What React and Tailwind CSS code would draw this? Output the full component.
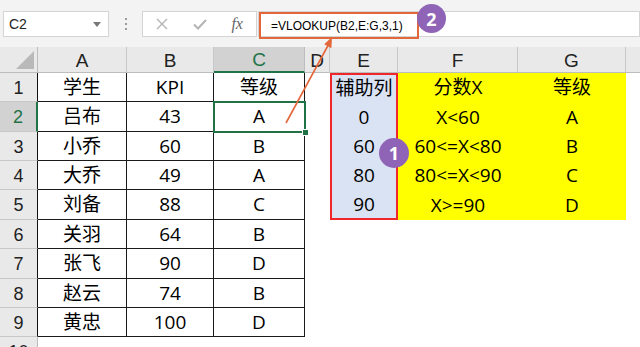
import React from "react";

const FONT = "font-['Open_Sans','Noto_Sans_CJK_SC',sans-serif]";

function HeaderCell({ label, selected, last }) {
  if (selected) {
    return (
      <div className="flex items-center justify-center bg-[#d2d2d2] border-r border-[#bdbdbd] border-b-2 border-b-[#217346] text-[#217346] text-[19px] font-['Liberation_Sans',sans-serif] leading-none pt-[1px]">
        {label}
      </div>
    );
  }
  return (
    <div className={"flex items-center justify-center bg-[#e9e9e9] border-b border-b-[#bdbdbd] text-[#222] text-[19px] font-['Liberation_Sans',sans-serif] leading-none pt-[1px] " + (last ? "" : "border-r border-r-[#c8c8c8]")}>
      {label}
    </div>
  );
}

function RowHead({ n, selected, table }) {
  if (selected) {
    return (
      <div className="flex items-center justify-center bg-[#d2d2d2] border-r-2 border-r-[#217346] border-b border-b-[#c8c8c8] text-[#217346] text-[18px] font-['Liberation_Sans',sans-serif] leading-none">
        {n}
      </div>
    );
  }
  return (
    <div className={"flex items-center justify-center bg-[#e9e9e9] border-b border-b-[#c8c8c8] text-[#222] text-[18px] font-['Liberation_Sans',sans-serif] leading-none items-start pt-[6px] " + (table ? "border-r border-r-[#111]" : "border-r border-r-[#bdbdbd]")}>
      {n}
    </div>
  );
}

function T({ children }) {
  return (
    <div className="flex items-center justify-center border-r border-b border-[#1a1a1a] text-[19px] text-black whitespace-nowrap">
      {children}
    </div>
  );
}

function Blank() {
  return <div />;
}

function E({ children, first, last }) {
  const cls = first
    ? "flex items-center justify-center bg-[#dae3f3] border-l-2 border-r-2 border-t-2 border-[#f0262a] text-[19px] text-black whitespace-nowrap"
    : last
    ? "flex items-center justify-center bg-[#dae3f3] border-l-2 border-r-2 border-b-2 border-[#f0262a] text-[19px] text-black whitespace-nowrap"
    : "flex items-center justify-center bg-[#dae3f3] border-l-2 border-r-2 border-[#f0262a] text-[19px] text-black whitespace-nowrap";
  return <div className={cls}>{children}</div>;
}

function Y({ children }) {
  return (
    <div className="flex items-center justify-center bg-[#ffff00] text-[19px] text-black whitespace-nowrap">
      {children}
    </div>
  );
}

export default function App() {
  const table = [
    ["学生", "KPI", "等级"],
    ["吕布", "43", "A"],
    ["小乔", "60", "B"],
    ["大乔", "49", "A"],
    ["刘备", "88", "C"],
    ["关羽", "64", "B"],
    ["张飞", "90", "D"],
    ["赵云", "74", "B"],
    ["黄忠", "100", "D"],
  ];
  const side = [
    ["辅助列", "分数X", "等级"],
    ["0", "X<60", "A"],
    ["60", "60<=X<80", "B"],
    ["80", "80<=X<90", "C"],
    ["90", "X>=90", "D"],
  ];

  return (
    <div className={"relative w-[640px] h-[347px] overflow-hidden bg-white " + FONT}>
      {/* Formula bar */}
      <div className="h-[47px] bg-[#f3f3f3] flex items-start pt-[11px]">
        <div className="ml-[3px] w-[106px] h-[26px] bg-white border border-[#d4d4d4] flex items-center justify-between pl-[5px] pr-[7px] text-[14px] text-[#222] font-['Liberation_Sans',sans-serif]">
          <span>C2</span>
          <svg width="8" height="5" viewBox="0 0 8 5">
            <path d="M0 0 L8 0 L4 5 Z" fill="#777" />
          </svg>
        </div>
        <div className="w-[33px] h-[26px] flex flex-col items-center justify-center gap-[3px]">
          <div className="w-[2px] h-[2px] bg-[#9a9a9a]" />
          <div className="w-[2px] h-[2px] bg-[#9a9a9a]" />
          <div className="w-[2px] h-[2px] bg-[#9a9a9a]" />
        </div>
        <div className="w-[115px] h-[26px] bg-white border border-[#d4d4d4] flex items-center">
          <div className="w-[38px] flex justify-center">
            <svg width="12" height="12" viewBox="0 0 12 12">
              <path d="M1 1 L11 11 M11 1 L1 11" stroke="#b4b4b4" strokeWidth="1.4" />
            </svg>
          </div>
          <div className="w-[38px] flex justify-center">
            <svg width="14" height="11" viewBox="0 0 14 11">
              <path d="M1 5.5 L5 9.5 L13 1" stroke="#b4b4b4" strokeWidth="2" fill="none" />
            </svg>
          </div>
          <div className="w-[38px] flex justify-center text-[16px] italic text-[#666] font-['Liberation_Serif',serif] leading-none">
            fx
          </div>
        </div>
        <div className="flex-1 h-[26px] bg-white border border-[#d4d4d4] ml-[1px] flex">
          <div className="w-[160px] h-[27px] border-2 border-[#e2673b] flex items-center pl-[10px] text-[12px] text-black font-['Liberation_Sans',sans-serif] whitespace-nowrap">
            =VLOOKUP(B2,E:G,3,1)
          </div>
        </div>
      </div>

      {/* Grid */}
      <div className="grid grid-cols-[38px_89px_87px_91px_25px_68px_120px_108px_1fr] grid-rows-[26px_29px_30px_29px_29px_30px_29px_30px_29px_29px_30px]">
        <div className="bg-[#e9e9e9] border-r border-r-[#bdbdbd] border-b border-b-[#bdbdbd] flex items-end justify-end pr-[3px] pb-[3px]">
          <svg width="18" height="18" viewBox="0 0 18 18">
            <path d="M18 0 L18 18 L0 18 Z" fill="#b9b9b9" />
          </svg>
        </div>
        <HeaderCell label="A" />
        <HeaderCell label="B" />
        <HeaderCell label="C" selected />
        <HeaderCell label="D" />
        <HeaderCell label="E" />
        <HeaderCell label="F" />
        <HeaderCell label="G" />
        <HeaderCell label="" last />

        {table.map((row, i) => (
          <React.Fragment key={i}>
            <RowHead n={i + 1} selected={i === 1} table />
            <T>{row[0]}</T>
            <T>{row[1]}</T>
            <T>{row[2]}</T>
            <Blank />
            {i < 5 ? (
              <>
                <E first={i === 0} last={i === 4}>{side[i][0]}</E>
                <Y>{side[i][1]}</Y>
                <Y>{side[i][2]}</Y>
              </>
            ) : (
              <>
                <Blank />
                <Blank />
                <Blank />
              </>
            )}
            <Blank />
          </React.Fragment>
        ))}
        <RowHead n={10} />
      </div>

      {/* selection */}
      <div className="absolute left-[213px] top-[101px] w-[93px] h-[32px] border-2 border-[#217346]" />
      <div className="absolute left-[302px] top-[129px] w-[7px] h-[7px] bg-[#217346] border border-white" />

      {/* arrow */}
      <svg className="absolute left-0 top-0 pointer-events-none" width="640" height="347" viewBox="0 0 640 347">
        <line x1="286" y1="123" x2="328" y2="45.5" stroke="#e3673a" strokeWidth="1.6" />
        <path d="M332 37 L331.4 48.2 L324.2 44.3 Z" fill="#e3673a" />
      </svg>

      {/* badges */}
      <div className="absolute left-[417px] top-[4px] w-[29px] h-[29px] rounded-full bg-[#8f63b5] text-white text-[18px] font-bold flex items-center justify-center leading-none">
        2
      </div>
      <div className="absolute left-[379px] top-[138px] w-[30px] h-[30px] rounded-full bg-[#8f63b5] text-white text-[18px] font-bold flex items-center justify-center leading-none">
        1
      </div>
    </div>
  );
}
